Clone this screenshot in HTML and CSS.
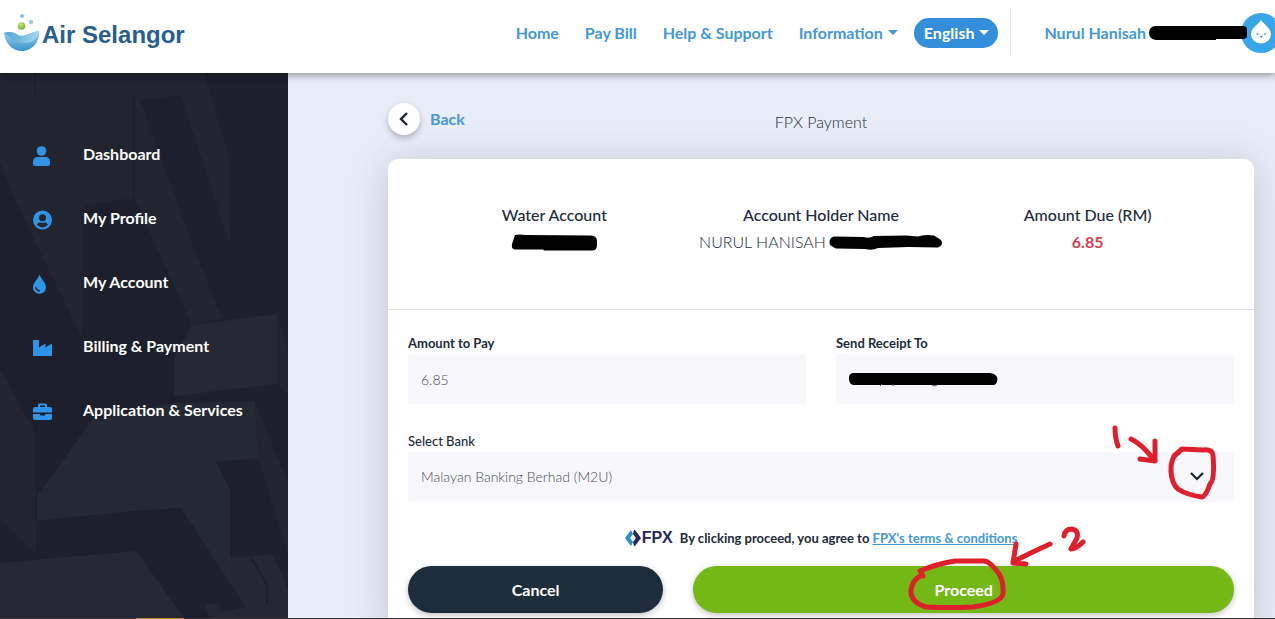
FILE: index.html
```html
<!DOCTYPE html>
<html lang="en">
<head>
<meta charset="utf-8">
<title>FPX Payment - Air Selangor</title>
<meta name="viewport" content="width=device-width, initial-scale=1">
<link rel="stylesheet" href="styles.css">
</head>
<body>
<header class="topbar">
  <a class="brand" href="#">
    <svg class="brand-mark" width="36" height="40" viewBox="0 0 36 40" aria-hidden="true">
      <defs>
        <linearGradient id="bowl" x1="0" y1="0" x2="0" y2="1"><stop offset="0" stop-color="#9bd3ee"/><stop offset="1" stop-color="#3b93cc"/></linearGradient>
        <linearGradient id="wave" x1="0" y1="0" x2="1" y2="0"><stop offset="0" stop-color="#4ba3d3"/><stop offset="1" stop-color="#a5daf0"/></linearGradient>
        <radialGradient id="ball" cx=".4" cy=".3" r=".7"><stop offset="0" stop-color="#c5e48a"/><stop offset="1" stop-color="#78b22f"/></radialGradient>
      </defs>
      <path d="M0 20C5 18 10 19 14 22C20 25 26 19 35 18C36 29 28 38 18 38C8 38 1 30 0 20Z" fill="url(#bowl)"/>
      <path d="M0 20C5 18 10 19 14 22C20 25 26 19 35 18C35 26 27 31 19 30C10 29 7 24 0 20Z" fill="url(#wave)"/>
      <circle cx="17.500" cy="13" r="3.800" fill="url(#ball)"/>
      <circle cx="18" cy="3" r="2" fill="#8fc0e0"/>
      <circle cx="27" cy="9" r="2.200" fill="#9ecbe6"/>
    </svg>
    <span>Air Selangor</span>
  </a>
  <nav class="nav">
    <a href="#">Home</a>
    <a href="#">Pay Bill</a>
    <a href="#">Help &amp; Support</a>
    <a class="has-caret" href="#">Information</a>
  </nav>
  <button class="lang has-caret" type="button">English</button>
  <a class="user" href="#">
    <span>Nurul Hanisah</span>
    <svg class="user-mask" width="100" height="16" viewBox="0 0 100 16" aria-hidden="true"><path d="M7 1H95Q99 1 99 5V11Q99 14 95 14H68V15H8Q1 14 1 8Q1 2 7 1Z"/></svg>
    <svg class="avatar" width="40" height="40" viewBox="0 0 40 40" aria-hidden="true">
      <circle cx="20" cy="20" r="20" fill="#38a7ea"/>
      <path d="M20 7C22 11 30 15 30 21A10 9.500 0 0 1 10 21C10 15 18 11 20 7Z" fill="#fff"/>
      <circle cx="16.500" cy="21" r=".9" fill="#38a7ea"/><circle cx="24" cy="21" r=".9" fill="#38a7ea"/>
      <path d="M18.500 23H22L20.200 25Z" fill="#2b8ccc"/>
    </svg>
  </a>
</header>

<div class="body">
  <aside class="sidebar">
    <svg class="facets" viewBox="0 0 288 546" preserveAspectRatio="xMidYMin slice" aria-hidden="true">
      <g fill="#222530">
        <path d="M0 0H204L230 88V172L218 136L181 22L140 27L190 165L222 245L192 252L134 125L82 132V265L15 127L0 90Z"/>
        <path d="M0 295L36 362V480L0 446Z"/>
        <path d="M192 252L277 241V311L174 323V285Z" fill="#262933"/>
        <path d="M92 347L174 330L255 328L258 385L216 389L230 417V510L181 435L132 438L36 448V425Z" fill="#252933"/>
        <path d="M0 490L136 478L185 546H0Z" fill="#262833"/>
        <path d="M258 385L255 328L262 347L288 410V480Z"/>
        <path d="M230 485L275 481L288 515V546H210L205 532L216 530L224 538L245 534L230 512Z" fill="#252833"/>
        <path d="M277 241L288 280V320L277 311Z"/>
      </g>
      <path d="M35 0V22M36 347V448M134 20V125M174 285V323" stroke="#1b1e29" fill="none"/>
      <path d="M231 512L245 534M250 483L267 512V530M273 480L288 512" stroke="#1d202c" stroke-width="2" fill="none"/>
    </svg>
    <nav class="menu">
      <a href="#">
        <svg width="20" height="20" viewBox="0 0 20 20" aria-hidden="true"><circle cx="8.500" cy="5" r="4.800"/><path d="M0 20V16Q0 11 5 11H12Q17 11 17 16V18Q17 20 15 20H2Q0 20 0 18Z"/></svg>
        <span>Dashboard</span></a>
      <a href="#">
        <svg width="20" height="20" viewBox="0 0 20 20" aria-hidden="true"><path fill-rule="evenodd" d="M9.500 .5A9.500 9.500 0 1 1 9.500 19.500A9.500 9.500 0 0 1 9.500 .5ZM9.500 4.200A3.500 3.500 0 1 0 9.500 11.200A3.500 3.500 0 0 0 9.500 4.200ZM4 14.800Q9.500 20 15 14.800Q13 12 11.500 12.400Q9.500 13 7.500 12.400Q6 12 4 14.800Z"/></svg>
        <span>My Profile</span></a>
      <a href="#">
        <svg width="20" height="20" viewBox="0 0 20 20" aria-hidden="true"><path d="M6.500 .5C8 5 13 9 13 13.500A6.500 6.200 0 0 1 0 13.500C0 9 5 5 6.500 .5Z"/><path d="M2.800 13.500Q3.500 16.500 6.500 16.800" fill="none" stroke="#1e2230" stroke-width="1.200" stroke-linecap="round"/></svg>
        <span>My Account</span></a>
      <a href="#">
        <svg width="20" height="20" viewBox="0 0 20 20" aria-hidden="true"><path d="M0 2H6V9.500L12.500 5.500V9.500L19 5.500V18H0Z"/></svg>
        <span>Billing &amp; Payment</span></a>
      <a href="#">
        <svg width="20" height="20" viewBox="0 0 20 20" aria-hidden="true"><path fill-rule="evenodd" d="M5 5V3Q5 1.500 6.500 1.500H12.500Q14 1.500 14 3V5H17Q19 5 19 7V10.500H0V7Q0 5 2 5ZM7 5H12V3.500H7ZM0 12H7V13.500H12V12H19V16Q19 18 17 18H2Q0 18 0 16Z"/></svg>
        <span>Application &amp; Services</span></a>
    </nav>
  </aside>

  <main class="main">
    <div class="page-head">
      <a class="back" href="#">
        <span class="back-disc"><svg width="10" height="14" viewBox="0 0 10 14" aria-hidden="true"><path d="M8 1L2 7L8 13" fill="none" stroke="#1d2733" stroke-width="2.400"/></svg></span>
        Back
      </a>
      <h1>FPX Payment</h1>
    </div>

    <section class="card">
      <dl class="summary">
        <div><dt>Water Account</dt>
          <dd><svg width="87" height="17" viewBox="0 0 87 17" role="img" aria-label="Hidden"><path d="M4 1Q8 0 14 1L80 1.500Q86 2 86 7V11Q86 16 82 16.500H33L32 15.500H4Q0 15 1 10Z"/></svg></dd></div>
        <div><dt>Account Holder Name</dt>
          <dd>NURUL HANISAH
            <svg width="115" height="17" viewBox="0 0 115 17" role="img" aria-label="Hidden"><path d="M6 2.500L36 3Q40 5 46 2L78 1.500L90 2.500Q96 0 106 1.500L113 6Q116 11 110 13.500L80 13L50 14Q44 17 37 15L8 14.500Q5 13 2 11Q0 4 6 2.500Z"/></svg></dd></div>
        <div><dt>Amount Due (RM)</dt><dd class="due">6.85</dd></div>
      </dl>

      <form class="form">
        <div class="pair">
          <div class="field">
            <label for="amount">Amount to Pay</label>
            <input id="amount" type="text" value="6.85">
          </div>
          <div class="field">
            <label for="receipt">Send Receipt To</label>
            <div class="control">
              <input id="receipt" type="text">
              <svg class="receipt-mask" width="150" height="15" viewBox="0 0 150 15" aria-hidden="true"><path d="M5 1H142Q149 2 149.500 7Q149 13 145 13H6Q2 13 1 8Q0 2 5 1Z"/><path d="M34 12L32 14M45 12V14M84 13Q87 15 89 13" fill="none" stroke="#555"/></svg>
            </div>
          </div>
        </div>
        <div class="field">
          <label class="medium" for="bank">Select Bank</label>
          <div class="control">
            <select id="bank"><option>Malayan Banking Berhad (M2U)</option></select>
            <svg class="chevron" width="14" height="9" viewBox="0 0 14 9" aria-hidden="true"><path d="M1 1L7 7L13 1" fill="none" stroke="#1d2733" stroke-width="2.200"/></svg>
            <svg class="ink ink-bank" width="110" height="80" viewBox="1110 422 110 80" aria-hidden="true"><path d="M1115 428Q1115 438 1118 446M1131 439Q1142 444 1154 460M1155 441V461L1140 459M1178 453Q1170 458 1171 472Q1172 484 1178 489Q1187 495 1202 497Q1206 496 1210 484Q1215 480 1213 455Q1212 449 1203 450L1182 449L1174 456"/></svg>
          </div>
        </div>
        <p class="terms">
          <svg width="16" height="16" viewBox="0 0 16 16" aria-hidden="true"><path d="M6 0L8 4L5 8L8 12L6 16L0 8Z" fill="#2d8fc9"/><path d="M9 0H10L16 8L10 16H9L8 12L11 8L8 4Z" fill="#27285c"/></svg>
          <b class="fpx">FPX</b>
          <span>By clicking proceed, you agree to <a href="#">FPX's terms &amp; conditions</a></span>
        </p>
        <div class="actions">
          <button class="cancel" type="button">Cancel</button>
          <button class="proceed" type="submit">Proceed
            <svg class="ink ink-proceed" width="184" height="86" viewBox="906 526 184 86" aria-hidden="true"><path d="M922 575Q912 580 911 590Q910 602 926 607Q950 608 973 607Q1001 603 1003 594Q1004 578 996 570Q989 561 984 561H955Q936 564 920 571L923 576M1016 544L1013 563L1026 564M1013 562Q1030 553 1050 544M1064 536Q1065 529 1072 529Q1079 531 1077 538L1071 549Q1076 549 1083 542"/></svg>
          </button>
        </div>
      </form>
    </section>
  </main>
</div>
<div class="edge"><span></span></div>
</body>
</html>
```
FILE: styles.css
```css
* { box-sizing: border-box; }
body {
  margin: 0;
  height: 100vh;
  display: flex;
  flex-direction: column;
  overflow: hidden;
  font-family: Lato, "Open Sans", sans-serif;
  font-size: 16px;
  line-height: 24px;
  color: #1d2b3a;
}
a { color: #4398db; text-decoration: none; }
button, input, select { font: inherit; }

.topbar {
  position: relative;
  z-index: 1;
  flex: none;
  display: flex;
  align-items: center;
  height: 73px;
  padding: 0 0 8px 4px;
  background: #fff;
  box-shadow: 0 2px 8px rgba(0, 0, 0, .4);
  font-weight: 700;
}
.brand {
  display: flex;
  align-items: center;
  gap: 2px;
  margin-right: auto;
  color: #27608c;
  font: 700 24px/32px "Liberation Sans", sans-serif;
}
.brand span { padding-top: 4px; }
.nav { display: flex; gap: 26px; }
.has-caret::after {
  content: "";
  display: inline-block;
  margin-left: 5px;
  vertical-align: 4px;
  border: 5px solid transparent;
  border-top-color: currentColor;
  border-bottom: 0;
}
.lang {
  margin: 0 12px 0 16px;
  height: 30px;
  padding: 0 9px 0 10px;
  border: 0;
  border-radius: 15px;
  background: #338fdb;
  color: #fff;
}
.user {
  display: flex;
  align-items: center;
  height: 48px;
  margin-right: -6px;
  padding-left: 33px;
  border-left: 1px solid #e6e8eb;
}
.user-mask { position: relative; margin: 0 -7px 0 2px; }

.body { flex: 1; min-height: 0; display: flex; overflow: hidden; }
.sidebar {
  position: relative;
  flex: none;
  width: 288px;
  background: #1d202c;
  overflow: hidden;
}
.facets { position: absolute; inset: 0; width: 100%; height: 100%; }
.menu {
  position: relative;
  display: flex;
  flex-direction: column;
  gap: 40px;
  padding: 69px 33px;
}
.menu a { display: flex; align-items: center; gap: 30px; color: #fff; font-weight: 700; }
.menu svg { fill: #2f94e6; margin-top: 4px; }

.main {
  flex: 1;
  min-width: 0;
  padding: 30px 21px 0 100px;
  background: #e9edf7;
  overflow: hidden;
}
.page-head {
  display: grid;
  grid-template-columns: 1fr auto 1fr;
  align-items: center;
  height: 32px;
}
.back { display: flex; align-items: center; gap: 10px; font-weight: 700; }
.back-disc {
  display: grid;
  place-items: center;
  width: 32px;
  height: 32px;
  border-radius: 50%;
  background: #fff;
  box-shadow: 0 3px 6px rgba(0, 0, 0, .25);
}
h1 { margin: 6px 0 0; font-size: 16px; font-weight: 300; }

.card {
  margin-top: 24px;
  border-radius: 10px;
  background: #fff;
  box-shadow: 0 4px 40px rgba(40, 40, 60, .2);
}
.summary {
  display: grid;
  grid-template-columns: repeat(3, 1fr);
  margin: 0;
  padding: 44px 33px 55px;
  border-bottom: 1px solid #dcdddf;
  text-align: center;
}
.summary dt { font-weight: 500; }
.summary dd {
  display: flex;
  align-items: center;
  justify-content: center;
  gap: 2px;
  height: 24px;
  margin: 3px 0 0;
  font-weight: 300;
  white-space: nowrap;
}
.summary .due { color: #d9404f; font-weight: 700; }

.form { padding: 24px 20px; }
.pair { display: grid; grid-template-columns: 1fr 1fr; gap: 30px; margin-bottom: 28px; }
.field label { display: block; height: 20px; font-size: 13px; line-height: 18px; font-weight: 700; }
.field .medium { font-weight: 500; }
.control { position: relative; }
input, select {
  display: block;
  width: 100%;
  height: 50px;
  padding: 0 13px;
  border: 0;
  border-radius: 4px;
  background: #f7f7fc;
  color: #495057;
  font-size: 14px;
  font-weight: 300;
  appearance: none;
}
.receipt-mask { position: absolute; left: 12px; top: 18px; }
.chevron { position: absolute; right: 30px; top: 20px; }
.ink {
  position: absolute;
  fill: none;
  stroke: #df1f2b;
  stroke-width: 5px;
  stroke-linecap: round;
  stroke-linejoin: round;
  pointer-events: none;
}
.ink-bank { right: 14px; top: -30px; }

.terms {
  display: flex;
  align-items: center;
  justify-content: center;
  margin: 24px 0 16px;
  font-size: 13px;
  font-weight: 700;
}
.terms a { text-decoration: underline; }
.fpx { margin: 0 7px 0 1px; color: #27285c; font: 700 16px/24px "Liberation Sans", sans-serif; }
.actions { display: grid; grid-template-columns: calc((100% + 30px) / 3 - 30px) 1fr; gap: 30px; }
.actions button {
  position: relative;
  height: 47px;
  border: 0;
  border-radius: 24px;
  color: #fff;
  font-weight: 700;
  box-shadow: 0 2px 6px rgba(0, 0, 0, .25);
}
.cancel { background: #1e2d3b; }
.proceed { background: #74b816; }
.ink-proceed { left: calc(50% - 58px); top: -40px; }

.edge { flex: none; height: 1px; padding-left: 136px; background: #35333a; }
.edge span { display: block; width: 48px; height: 1px; background: #c07a2c; }
```
